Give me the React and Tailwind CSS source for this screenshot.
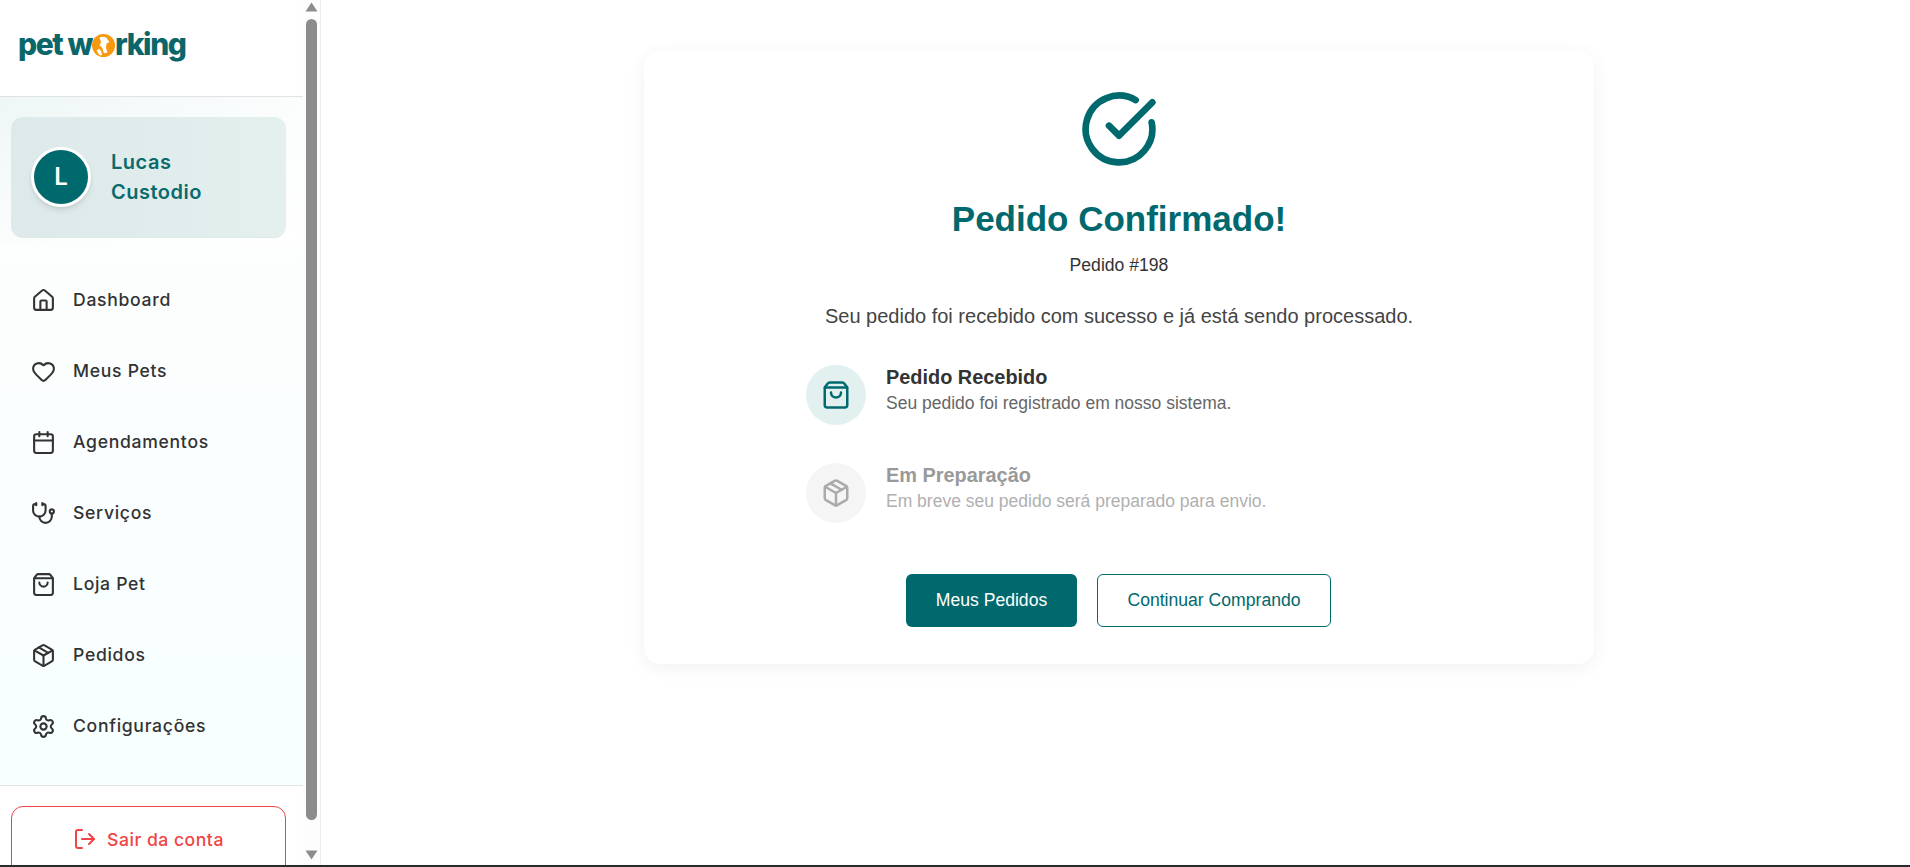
import React from 'react';
import { House, Heart, Calendar, Stethoscope, ShoppingBag, Package, Settings, LogOut, CircleCheckBig } from 'lucide-react';

const NAV_ITEMS = [
  { label: 'Dashboard', icon: House },
  { label: 'Meus Pets', icon: Heart },
  { label: 'Agendamentos', icon: Calendar },
  { label: 'Serviços', icon: Stethoscope },
  { label: 'Loja Pet', icon: ShoppingBag },
  { label: 'Pedidos', icon: Package },
  { label: 'Configurações', icon: Settings },
];

function Logo() {
  return (
    <div className="flex items-center font-['Inter',sans-serif] font-extrabold text-[30px] leading-none tracking-[-1.4px] text-[#0b666a]">
      <span className="whitespace-pre">pet w</span>
      <svg width="23" height="23" viewBox="0 0 25 25" className="mt-[3px] shrink-0">
        <circle cx="12.5" cy="12.5" r="12.5" fill="#f7980f" />
        <path d="M8 4c3-2 8-1 9 2l2 3-3 1-1 5 2 5-4 1-2-6-3-3 2-3z" fill="#ffffff" />
        <path d="M5 18l3-2 2 3 1 4-3 0z" fill="#ffffff" />
      </svg>
      <span>rking</span>
    </div>
  );
}

function ScrollBar() {
  return (
    <div className="w-[17px] shrink-0 flex flex-col items-center bg-[#fdfdfd] pt-[2px] pr-[1px]">
      <svg width="13" height="10" viewBox="0 0 13 10"><path d="M6.5 0.5 12.5 9.5H0.5z" fill="#8c8c8c" /></svg>
      <div className="w-[11px] h-[801px] mt-[7px] rounded-full bg-[#8c8c8c]" />
      <svg width="13" height="10" viewBox="0 0 13 10" className="mt-[30px]"><path d="M0.5 0.5H12.5L6.5 9.5z" fill="#8c8c8c" /></svg>
    </div>
  );
}

function Sidebar() {
  return (
    <aside className="w-[321px] shrink-0 flex border-r border-[#ececec] bg-white overflow-hidden">
      <div className="w-[303px] shrink-0 flex flex-col bg-gradient-to-b from-white via-[#fbfefe] to-[#f6ffff]">
        <div className="h-[97px] shrink-0 bg-white border-b border-[#e2e2e2] pl-[18px] pt-[29px]">
          <Logo />
        </div>
        <div className="h-[149px] shrink-0 pl-[11px] pr-[17px] pt-[20px] bg-gradient-to-br from-[#eef6f6] via-[#fbfdfd] to-white">
          <div className="h-[121px] flex items-center pl-[20px] gap-[20px] rounded-xl border-b border-[#e1e8e8] bg-gradient-to-r from-[#dde9ea] to-[#e3f0ee]">
            <div className="w-[60px] h-[60px] shrink-0 rounded-full border-[3px] border-white bg-[#00696d] shadow-md flex items-center justify-center text-white font-['Inter',sans-serif] font-semibold text-[24px]">L</div>
            <div className="font-['Inter',sans-serif] font-semibold text-[20px] leading-[30px] tracking-[0.5px] text-[#0b6a6e]">Lucas<br />Custodio</div>
          </div>
        </div>
        <nav className="h-[539px] shrink-0 pt-[19px] flex flex-col">
          {NAV_ITEMS.map((item) => {
            const Icon = item.icon;
            return (
              <div key={item.label} className="h-[71px] shrink-0 flex items-center pl-[31px] gap-[17px] font-['Inter',sans-serif] font-medium text-[17.6px] tracking-[0.7px] text-[#333333]">
                <Icon size={25} strokeWidth={2} className="text-[#333333]" />
                <span>{item.label}</span>
              </div>
            );
          })}
        </nav>
        <div className="border-t border-[#e2e2e2] pl-[11px] pr-[17px] pt-[20px] bg-white flex-1">
          <div className="h-[80px] rounded-xl border border-[#ef4444] flex justify-center pt-[20px] gap-[10px] font-['Inter',sans-serif] font-medium text-[17.6px] tracking-[0.5px] text-[#ef4444]">
            <LogOut size={24} strokeWidth={2} />
            <span>Sair da conta</span>
          </div>
        </div>
      </div>
      <ScrollBar />
    </aside>
  );
}

function Step({ icon: Icon, title, text, muted }) {
  return (
    <div className="flex items-start gap-[20px]">
      <div className={`w-[60px] h-[60px] rounded-full flex items-center justify-center ${muted ? 'bg-[#f5f5f5] text-[#aaaaaa]' : 'bg-[#e3f0f0] text-[#00696d]'}`}>
        <Icon size={30} strokeWidth={2} />
      </div>
      <div>
        <div className={`font-bold text-[19.9px] leading-[24px] ${muted ? 'text-[#999999]' : 'text-[#333333]'}`}>{title}</div>
        <div className={`mt-[1px] text-[17.5px] leading-[26px] ${muted ? 'text-[#b0b0b0]' : 'text-[#666666]'}`}>{text}</div>
      </div>
    </div>
  );
}

export default function App() {
  return (
    <div className="h-screen flex flex-col overflow-hidden bg-white font-['Liberation_Sans',Arial,sans-serif]">
      <div className="flex-1 min-h-0 flex">
        <Sidebar />
        <main className="flex-1 flex justify-center pt-[51px] pl-[7px]">
          <div className="w-[950px] h-[613px] bg-white rounded-2xl shadow-[0_4px_20px_rgba(0,0,0,0.06)] flex flex-col items-center pt-[38px]">
            <CircleCheckBig size={80} strokeWidth={2} className="text-[#00696d]" />
            <h1 className="mt-[28px] font-bold text-[35px] leading-[44px] text-[#00696d]">Pedido Confirmado!</h1>
            <p className="mt-[12px] text-[17.6px] leading-[24px] text-[#333333]">Pedido #198</p>
            <p className="mt-[25px] text-[20px] leading-[28px] text-[#444444]">Seu pedido foi recebido com sucesso e já está sendo processado.</p>
            <div className="mt-[35px] w-[626px] flex flex-col gap-[38px]">
              <Step icon={ShoppingBag} title="Pedido Recebido" text="Seu pedido foi registrado em nosso sistema." />
              <Step icon={Package} title="Em Preparação" text="Em breve seu pedido será preparado para envio." muted />
            </div>
            <div className="mt-[51px] mr-[1px] flex gap-[20px] text-[17.6px]">
              <button className="w-[171px] h-[53px] rounded-md bg-[#00696d] text-white">Meus Pedidos</button>
              <button className="w-[234px] h-[53px] rounded-md border border-[#00696d] text-[#00696d] bg-white">Continuar Comprando</button>
            </div>
          </div>
        </main>
      </div>
      <div className="h-[2px] shrink-0 bg-[#2a2a2a]" />
    </div>
  );
}
